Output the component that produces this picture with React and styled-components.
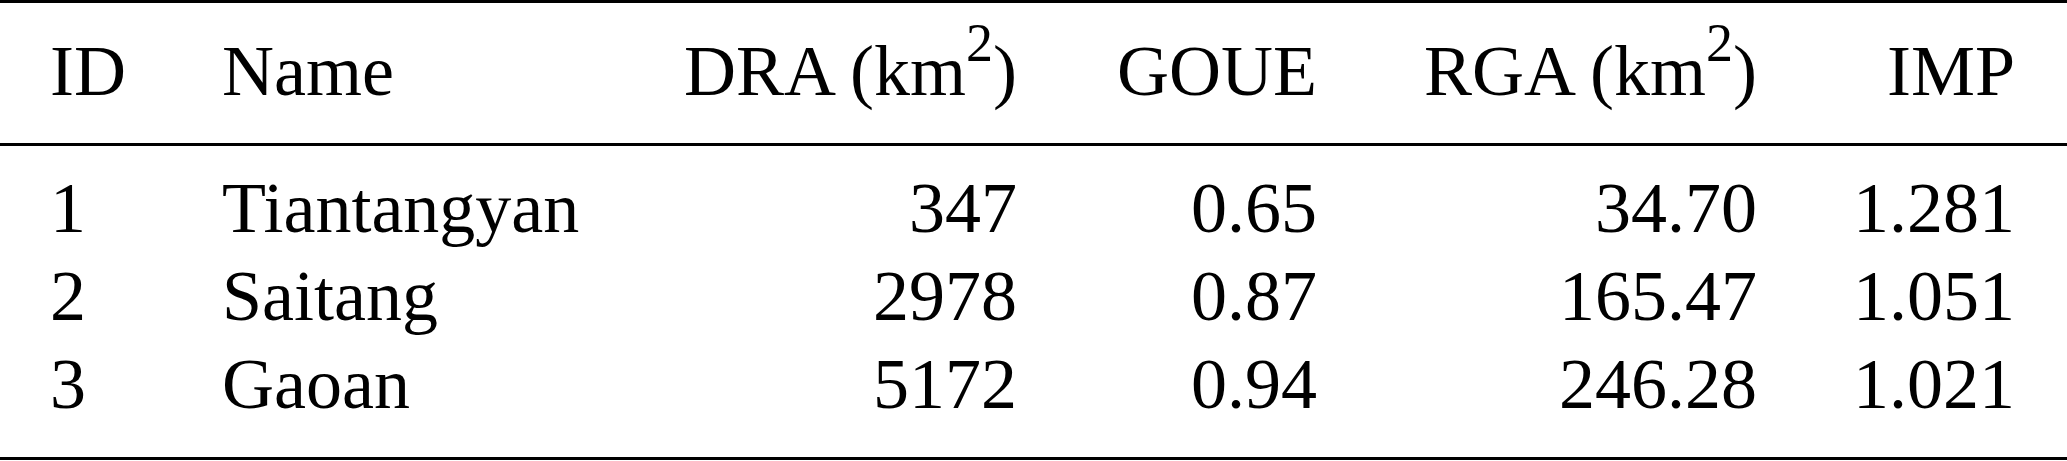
import React from "react";
import styled, { createGlobalStyle } from "styled-components";

const GlobalStyle = createGlobalStyle`
  html, body {
    margin: 0;
    padding: 0;
    background: #fff;
  }
  body {
    font-family: "Liberation Serif", "Times New Roman", serif;
    color: #000;
  }
`;

const Table = styled.div`
  width: 2067px;
  border-top: 3px solid #000;
  border-bottom: 3px solid #000;
  font-size: 72px;
  line-height: 88px;
`;

const Head = styled.div`
  padding: 24px 0 28px;
  border-bottom: 3px solid #000;
`;

const Body = styled.div`
  padding: 18px 0 29px;
`;

const Row = styled.div`
  display: grid;
  grid-template-columns: 172px 400px 395px 300px 440px 258px;
  padding: 0 52px 0 50px;
  height: 88px;
`;

const Cell = styled.div`
  text-align: ${(p) => (p.$right ? "right" : "left")};
  white-space: nowrap;
`;

const Sup = styled.span`
  font-size: 54px;
  line-height: 0;
  vertical-align: 34px;
`;

const columns = [
  { key: "id", label: "ID" },
  { key: "name", label: "Name" },
  { key: "dra", label: "DRA (km", unit: true, right: true },
  { key: "goue", label: "GOUE", right: true },
  { key: "rga", label: "RGA (km", unit: true, right: true },
  { key: "imp", label: "IMP", right: true },
];

const rows = [
  { id: "1", name: "Tiantangyan", dra: "347", goue: "0.65", rga: "34.70", imp: "1.281" },
  { id: "2", name: "Saitang", dra: "2978", goue: "0.87", rga: "165.47", imp: "1.051" },
  { id: "3", name: "Gaoan", dra: "5172", goue: "0.94", rga: "246.28", imp: "1.021" },
];

export default function App() {
  return (
    <>
      <GlobalStyle />
      <Table>
        <Head>
          <Row>
            {columns.map((c) => (
              <Cell key={c.key} $right={c.right}>
                {c.label}
                {c.unit && (
                  <>
                    <Sup>2</Sup>)
                  </>
                )}
              </Cell>
            ))}
          </Row>
        </Head>
        <Body>
          {rows.map((r) => (
            <Row key={r.id}>
              {columns.map((c) => (
                <Cell key={c.key} $right={c.right}>
                  {r[c.key]}
                </Cell>
              ))}
            </Row>
          ))}
        </Body>
      </Table>
    </>
  );
}
